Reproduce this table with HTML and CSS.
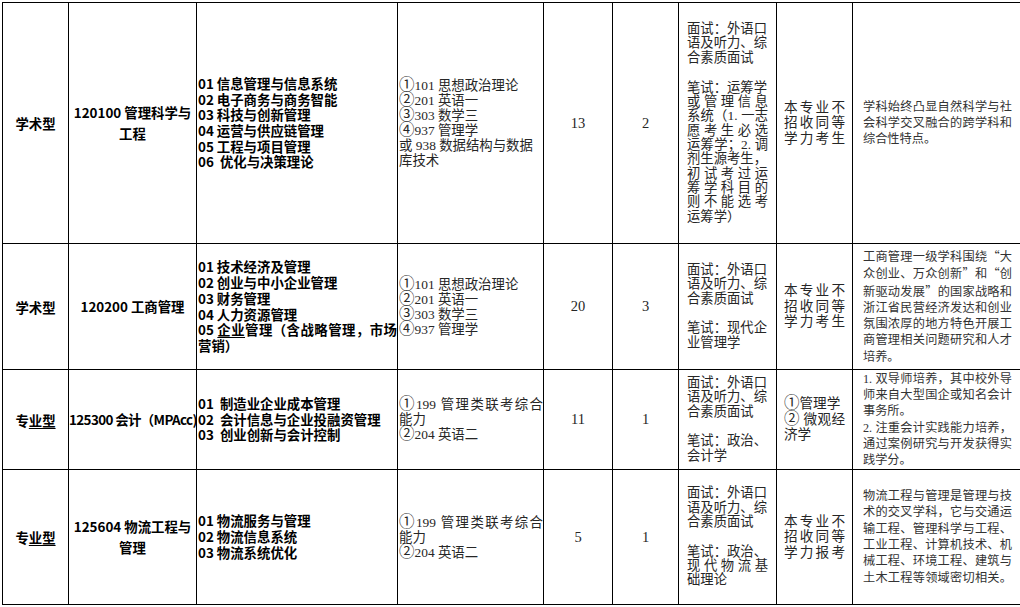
FILE: index.html
```html
<!DOCTYPE html>
<html lang="zh-CN">
<head>
<meta charset="utf-8">
<title>招生专业目录</title>
<link rel="stylesheet" href="styles.css">
</head>
<body>
<table class="grid">
  <colgroup>
    <col class="w1"><col class="w2"><col class="w3"><col class="w4"><col class="w5"><col class="w6"><col class="w7"><col class="w8"><col class="w9">
  </colgroup>
  <tbody>
    <tr class="r1">
      <td class="type">学术型</td>
      <td class="major"><span class="ln">120100 管理科学与</span><span class="ln">工程</span></td>
      <td class="dir">
        <span class="ln">01 信息管理与信息系统</span>
        <span class="ln">02 电子商务与商务智能</span>
        <span class="ln">03 科技与创新管理</span>
        <span class="ln">04 运营与供应链管理</span>
        <span class="ln">05 工程与项目管理</span>
        <span class="ln">06&nbsp; 优化与决策理论</span>
      </td>
      <td class="exam">
        <span class="ln"><span class="c">①</span>101 思想政治理论</span>
        <span class="ln"><span class="c">②</span>201 英语一</span>
        <span class="ln"><span class="c">③</span>303 数学三</span>
        <span class="ln"><span class="c">④</span>937 管理学</span>
        <span class="ln">或 938 数据结构与数据</span>
        <span class="ln">库技术</span>
      </td>
      <td class="num">13</td>
      <td class="num">2</td>
      <td class="retest">
        <span class="ln">面试：外语口</span>
        <span class="ln">语及听力、综</span>
        <span class="ln">合素质面试</span>
        <span class="gap"></span>
        <span class="ln">笔试：运筹学</span>
        <span class="ln j">或管理信息</span>
        <span class="ln j">系统（1. 一志</span>
        <span class="ln j">愿考生必选</span>
        <span class="ln j">运筹学；2. 调</span>
        <span class="ln">剂生源考生，</span>
        <span class="ln j">初试考过运</span>
        <span class="ln j">筹学科目的</span>
        <span class="ln j">则不能选考</span>
        <span class="ln">运筹学）</span>
      </td>
      <td class="equiv">
        <span class="ln j">本专业不</span>
        <span class="ln j">招收同等</span>
        <span class="ln j">学力考生</span>
      </td>
      <td class="note">
        <span class="ln j">学科始终凸显自然科学与社</span>
        <span class="ln j">会科学交叉融合的跨学科和</span>
        <span class="ln">综合性特点。</span>
      </td>
    </tr>
    <tr class="r2">
      <td class="type">学术型</td>
      <td class="major"><span class="ln">120200 工商管理</span></td>
      <td class="dir">
        <span class="ln">01 技术经济及管理</span>
        <span class="ln">02 创业与中小企业管理</span>
        <span class="ln">03 财务管理</span>
        <span class="ln">04 人力资源管理</span>
        <span class="ln j">05 <u>企业</u>管理（含战略管理，市场</span>
        <span class="ln">营销）</span>
      </td>
      <td class="exam">
        <span class="ln"><span class="c">①</span>101 思想政治理论</span>
        <span class="ln"><span class="c">②</span>201 英语一</span>
        <span class="ln"><span class="c">③</span>303 数学三</span>
        <span class="ln"><span class="c">④</span>937 管理学</span>
      </td>
      <td class="num">20</td>
      <td class="num">3</td>
      <td class="retest">
        <span class="ln">面试：外语口</span>
        <span class="ln">语及听力、综</span>
        <span class="ln">合素质面试</span>
        <span class="gap"></span>
        <span class="ln">笔试：现代企</span>
        <span class="ln">业管理学</span>
      </td>
      <td class="equiv">
        <span class="ln j">本专业不</span>
        <span class="ln j">招收同等</span>
        <span class="ln j">学力考生</span>
      </td>
      <td class="note">
        <span class="ln j">工商管理一级学科围绕<span class="q">“</span>大</span>
        <span class="ln j">众创业、万众创新<span class="q">”</span>和<span class="q">“</span>创</span>
        <span class="ln j">新驱动发展<span class="q">”</span>的国家战略和</span>
        <span class="ln j">浙江省民营经济发达和创业</span>
        <span class="ln j">氛围浓厚的地方特色开展工</span>
        <span class="ln j">商管理相关问题研究和人才</span>
        <span class="ln">培养。</span>
      </td>
    </tr>
    <tr class="r3">
      <td class="type">专<u>业型</u></td>
      <td class="major"><span class="ln tight">125300 会计（MPAcc)</span></td>
      <td class="dir">
        <span class="ln">01&nbsp; 制造业企业成本管理</span>
        <span class="ln">02&nbsp; 会计信息与企业投融资管理</span>
        <span class="ln">03&nbsp; 创业创新与会计控制</span>
      </td>
      <td class="exam">
        <span class="ln j"><span class="c">①</span>199 管理类联考综合</span>
        <span class="ln">能力</span>
        <span class="ln"><span class="c">②</span>204 英语二</span>
      </td>
      <td class="num">11</td>
      <td class="num">1</td>
      <td class="retest">
        <span class="ln">面试：外语口</span>
        <span class="ln">语及听力、综</span>
        <span class="ln">合素质面试</span>
        <span class="gap"></span>
        <span class="ln">笔试：政治、</span>
        <span class="ln">会计学</span>
      </td>
      <td class="equiv">
        <span class="ln"><span class="c">①</span>管理学</span>
        <span class="ln j"><span class="c">②</span> 微观经</span>
        <span class="ln">济学</span>
      </td>
      <td class="note">
        <span class="ln j">1. 双导师培养，其中校外导</span>
        <span class="ln j">师来自大型国企或知名会计</span>
        <span class="ln">事务所。</span>
        <span class="ln j">2. 注重会计实践能力培养，</span>
        <span class="ln j">通过案例研究与开发获得实</span>
        <span class="ln">践学分。</span>
      </td>
    </tr>
    <tr class="r4">
      <td class="type">专<u>业型</u></td>
      <td class="major"><span class="ln">125604 物流工程与</span><span class="ln">管理</span></td>
      <td class="dir">
        <span class="ln">01 物流服务与管理</span>
        <span class="ln">02 物流信息系统</span>
        <span class="ln">03 物流系统优化</span>
      </td>
      <td class="exam">
        <span class="ln j"><span class="c">①</span>199 管理类联考综合</span>
        <span class="ln">能力</span>
        <span class="ln"><span class="c">②</span>204 英语二</span>
      </td>
      <td class="num">5</td>
      <td class="num">1</td>
      <td class="retest">
        <span class="ln">面试：外语口</span>
        <span class="ln">语及听力、综</span>
        <span class="ln">合素质面试</span>
        <span class="gap"></span>
        <span class="ln">笔试：政治、</span>
        <span class="ln j">现代物流基</span>
        <span class="ln">础理论</span>
      </td>
      <td class="equiv">
        <span class="ln j">本专业不</span>
        <span class="ln j">招收同等</span>
        <span class="ln j">学力报考</span>
      </td>
      <td class="note">
        <span class="ln j">物流工程与管理是管理与技</span>
        <span class="ln j">术的交叉学科，它与交通运</span>
        <span class="ln j">输工程、管理科学与工程、</span>
        <span class="ln j">工业工程、计算机技术、机</span>
        <span class="ln j">械工程、环境工程、建筑与</span>
        <span class="ln j">土木工程等领域密切相关。</span>
      </td>
    </tr>
  </tbody>
</table>
</body>
</html>
```

FILE: styles.css
```css
html, body {
  margin: 0;
  padding: 0;
  background: #fff;
  overflow: hidden;
  width: 1020px;
  height: 607px;
}

.grid {
  border-collapse: collapse;
  table-layout: fixed;
  width: 1020px;
  margin: 2px 0 0 2px;
  color: #000;
}

.w1 { width: 66px; }
.w2 { width: 128px; }
.w3 { width: 201px; }
.w4 { width: 146px; }
.w5 { width: 69px; }
.w6 { width: 66px; }
.w7 { width: 98px; }
.w8 { width: 76px; }
.w9 { width: 170px; }

td {
  border: 1px solid #000;
  padding: 0;
  vertical-align: middle;
  overflow: hidden;
}

.r1 { height: 241px; }
.r2 { height: 126px; }
.r3 { height: 100px; }
.r4 { height: 135px; }

.ln {
  display: block;
  white-space: nowrap;
}

.j {
  text-align: justify;
  text-align-last: justify;
}

.gap {
  display: block;
  height: 15.5px;
}

.type,
.major,
.dir {
  font-family: "Noto Sans CJK SC", sans-serif;
  font-weight: 700;
  font-size: 13.4px;
  color: #000;
}

.type {
  text-align: center;
}

.major {
  text-align: center;
  line-height: 21px;
}

.tight {
  letter-spacing: -0.6px;
}

.dir {
  line-height: 15.7px;
  padding-left: 1px;
}

.dir u,
.type u {
  text-decoration-thickness: 1px;
  text-underline-offset: 2px;
}

.exam,
.num,
.retest,
.equiv,
.note {
  font-family: "Liberation Serif", "Noto Sans CJK SC", serif;
  font-weight: 400;
  color: #262626;
}

.exam {
  font-size: 13.4px;
  line-height: 15px;
  padding-left: 1px;
}

.num {
  font-size: 14.5px;
  text-align: center;
}

.retest {
  font-size: 13.33px;
  line-height: 14.33px;
  padding: 0 8px 0 8px;
}

.equiv {
  font-size: 13.6px;
  line-height: 15.5px;
  padding: 0 7px;
}

.note {
  font-size: 12.2px;
  line-height: 16.3px;
  padding: 0 10px;
  color: #333;
}

.note .ln {
  width: 149px;
}

.q {
  font-family: "Noto Sans CJK SC", sans-serif;
}

.c {
  font-family: "Noto Sans CJK SC", sans-serif;
  font-size: 15.5px;
  line-height: 1px;
}
```
